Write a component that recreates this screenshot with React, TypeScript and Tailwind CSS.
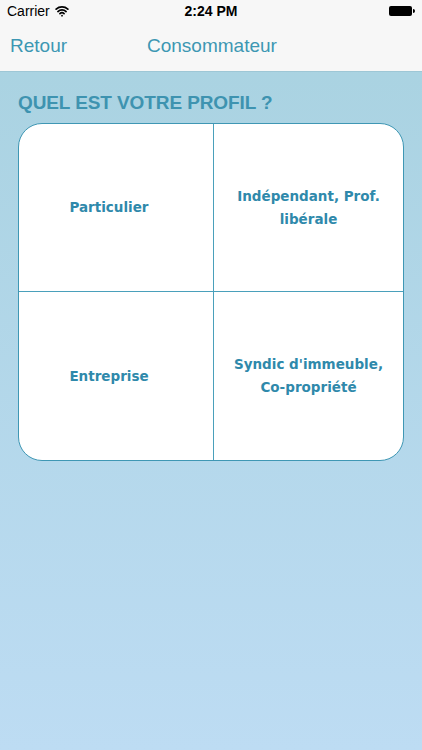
import { Wifi } from "lucide-react";

const cells = [
  { id: "particulier", lines: ["Particulier"], left: true },
  { id: "independant", lines: ["Indépendant, Prof.", "libérale"], left: false },
  { id: "entreprise", lines: ["Entreprise"], left: true },
  { id: "syndic", lines: ["Syndic d'immeuble,", "Co-propriété"], left: false },
];

export default function App() {
  return (
    <main className="flex min-h-[750px] flex-col bg-gradient-to-b from-[#a8d2e0] to-[#bddcf3] font-['Liberation_Sans',Arial,sans-serif]">
      <header className="bg-[#f7f7f7]">
        <div className="relative flex h-[22px] items-center px-[7px] text-[14px] text-black">
          <span className="flex items-center gap-[5px]">
            Carrier
            <Wifi className="h-[14px] w-[14px]" strokeWidth={3} />
          </span>
          <span className="absolute left-1/2 -translate-x-1/2 text-[14px] font-bold">2:24 PM</span>
          <span className="ml-auto flex items-center">
            <span className="h-[10px] w-[23px] rounded-[2px] bg-black" />
            <span className="ml-[1px] h-[4px] w-[2px] rounded-r-sm bg-black" />
          </span>
        </div>
        <nav className="relative flex h-[50px] items-center border-b border-[#9ec7d6] px-[10px] text-[19px] text-[#3d97b3]">
          <span>Retour</span>
          <span className="absolute left-[147px]">Consommateur</span>
        </nav>
      </header>

      <section className="px-[18px] pt-[20px]">
        <h1 className="text-[19px] font-bold leading-[22px] tracking-[-0.1px] text-[#3e93b0]">
          QUEL EST VOTRE PROFIL ?
        </h1>

        <div className="mt-[9px] grid h-[338px] grid-cols-[195px_1fr] grid-rows-2 overflow-hidden rounded-[24px] border-[1.5px] border-[#3f97b4] bg-white">
          {cells.map((cell, index) => (
            <button
              key={cell.id}
              className={[
                "flex flex-col items-center justify-center font-['DejaVu_Sans',Verdana,sans-serif] text-[13.5px] font-bold leading-[23px] text-[#2f89ab]",
                cell.left ? "border-r-[1.5px] border-[#4aa0bb] pr-[14px]" : "",
                index < 2 ? "border-b-[1.5px] border-[#4aa0bb]" : "",
              ].join(" ")}
            >
              {cell.lines.map((line) => (
                <span key={line}>{line}</span>
              ))}
            </button>
          ))}
        </div>
      </section>
    </main>
  );
}
